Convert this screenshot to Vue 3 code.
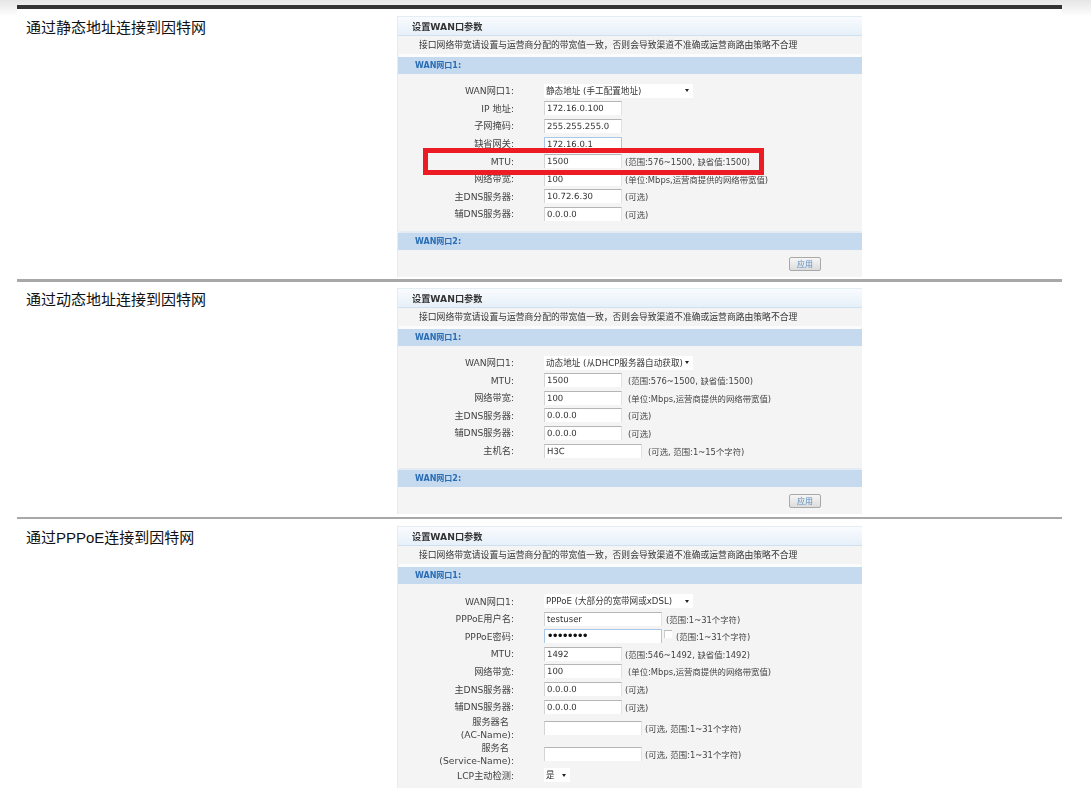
<script setup>
const notice = '接口网络带宽请设置与运营商分配的带宽值一致，否则会导致渠道不准确或运营商路由策略不合理'
const mtuHint = (a, b, c) => `(范围:${a}~${b}, 缺省值:${c})`
const bandHint = '(单位:Mbps,运营商提供的网络带宽值)'

const sections = [
  {
    id: 'static',
    title: '通过静态地址连接到因特网',
    footer: true,
    highlight: true,
    rows: [
      { label: 'WAN网口1:', select: '静态地址 (手工配置地址)', width: 149 },
      { label: 'IP 地址:', value: '172.16.0.100', width: 78 },
      { label: '子网掩码:', value: '255.255.255.0', width: 78 },
      { label: '缺省网关:', value: '172.16.0.1', width: 78, focus: true },
      { label: 'MTU:', value: '1500', width: 78, hint: mtuHint(576, 1500, 1500), gap: 3 },
      { label: '网络带宽:', value: '100', width: 78, hint: bandHint, gap: 3 },
      { label: '主DNS服务器:', value: '10.72.6.30', width: 78, hint: '(可选)', gap: 3 },
      { label: '辅DNS服务器:', value: '0.0.0.0', width: 78, hint: '(可选)', gap: 3 }
    ]
  },
  {
    id: 'dynamic',
    title: '通过动态地址连接到因特网',
    footer: true,
    rows: [
      { label: 'WAN网口1:', select: '动态地址 (从DHCP服务器自动获取)', width: 149 },
      { label: 'MTU:', value: '1500', width: 78, hint: mtuHint(576, 1500, 1500), gap: 6 },
      { label: '网络带宽:', value: '100', width: 78, hint: bandHint, gap: 6 },
      { label: '主DNS服务器:', value: '0.0.0.0', width: 78, hint: '(可选)', gap: 6 },
      { label: '辅DNS服务器:', value: '0.0.0.0', width: 78, hint: '(可选)', gap: 6 },
      { label: '主机名:', value: 'H3C', width: 98, hint: '(可选, 范围:1~15个字符)', gap: 6 }
    ]
  },
  {
    id: 'pppoe',
    title: '通过PPPoE连接到因特网',
    rows: [
      { label: 'WAN网口1:', select: 'PPPoE (大部分的宽带网或xDSL)', width: 149 },
      { label: 'PPPoE用户名:', value: 'testuser', width: 118, hint: '(范围:1~31个字符)', gap: 4 },
      { label: 'PPPoE密码:', value: '••••••••', width: 118, focus: true, secret: true, check: true, hint: '(范围:1~31个字符)', gap: 4 },
      { label: 'MTU:', value: '1492', width: 78, hint: mtuHint(546, 1492, 1492), gap: 3 },
      { label: '网络带宽:', value: '100', width: 78, hint: bandHint, gap: 6 },
      { label: '主DNS服务器:', value: '0.0.0.0', width: 78, hint: '(可选)', gap: 3 },
      { label: '辅DNS服务器:', value: '0.0.0.0', width: 78, hint: '(可选)', gap: 3 },
      { label: '服务器名', sub: '(AC-Name):', value: '', width: 98, hint: '(可选, 范围:1~31个字符)', gap: 3 },
      { label: '服务名', sub: '(Service-Name):', value: '', width: 98, hint: '(可选, 范围:1~31个字符)', gap: 3 },
      { label: 'LCP主动检测:', select: '是', width: 26 }
    ]
  }
]
</script>

<template>
  <div class="page">
    <div class="content">
      <section v-for="s in sections" :key="s.id" class="section" :class="s.id">
        <h3 class="section-title">{{ s.title }}</h3>
        <div class="shot">
          <div class="panel">
            <div class="panel-head">设置WAN口参数</div>
            <div class="panel-note">{{ notice }}</div>
            <div class="bar">WAN网口1:</div>
            <div class="form">
              <div v-for="r in s.rows" :key="r.label" class="row" :class="{ tall: r.sub }">
                <div class="label">
                  <template v-if="r.sub">
                    <span class="label-top">{{ r.label }}</span>
                    <span>{{ r.sub }}</span>
                  </template>
                  <template v-else>{{ r.label }}</template>
                </div>
                <div v-if="r.select" class="select" :style="{ width: r.width + 'px' }">
                  <span>{{ r.select }}</span>
                  <i class="caret"></i>
                </div>
                <div v-else class="input" :class="{ focus: r.focus, secret: r.secret }" :style="{ width: r.width + 'px' }">{{ r.value }}</div>
                <i v-if="r.check" class="check"></i>
                <div v-if="r.hint" class="hint" :style="{ marginLeft: r.gap + 'px' }">{{ r.hint }}</div>
              </div>
            </div>
            <template v-if="s.footer">
              <div class="bar second">WAN网口2:</div>
              <div class="panel-foot">
                <button class="apply" type="button">应用</button>
              </div>
            </template>
          </div>
          <div v-if="s.highlight" class="mark"></div>
        </div>
      </section>
    </div>
  </div>
</template>

<style>
html,
body {
  margin: 0;
  background: #fff;
}
</style>

<style scoped>
.page {
  height: 788px;
  overflow: hidden;
  box-sizing: border-box;
  padding-top: 5px;
  background: linear-gradient(#e6e6e6, #fff 17px);
  font-family: "DejaVu Sans", "Noto Sans CJK SC", sans-serif;
}
.content {
  width: 1045px;
  margin-left: 17px;
  border-top: 4px solid #333;
  background: #fff;
}
.section {
  display: flex;
  align-items: flex-start;
}
.static {
  padding: 7px 0 2px;
}
.dynamic {
  padding: 6px 0 3px;
  border-top: 3px solid #a8a8a8;
}
.pppoe {
  padding-top: 7px;
  border-top: 2px solid #a8a8a8;
}
.section-title {
  width: 380px;
  margin: 0;
  padding: 1px 0 0 9px;
  box-sizing: border-box;
  flex-shrink: 0;
  font-family: "Liberation Sans", "Noto Sans CJK SC", sans-serif;
  font-size: 15px;
  font-weight: 400;
  line-height: 22px;
  color: #111;
}
.shot {
  position: relative;
  width: 465px;
}
.panel {
  background: #f4f4f4;
  border-left: 1px solid #e3ebf3;
  box-sizing: border-box;
  font-size: 9.2px;
  color: #444;
  filter: blur(0.5px);
}
.panel-head {
  height: 20px;
  padding-left: 14px;
  line-height: 20px;
  font-weight: 700;
  font-size: 9.2px;
  color: #333;
  background: linear-gradient(#f9fbfe, #e6f0f9);
  border-top: 1px solid #e3edf6;
  box-sizing: border-box;
  border-bottom: 1px solid #cfe0f1;
}
.panel-note {
  height: 16px;
  padding-left: 21px;
  margin-top: 1px;
  line-height: 16px;
  font-size: 8.8px;
  color: #333;
  white-space: nowrap;
}
.bar {
  height: 17px;
  margin-top: 4px;
  padding-left: 17px;
  line-height: 17px;
  font-size: 8px;
  font-weight: 700;
  color: #2a6db5;
  background: #c5daef;
  box-shadow: 0 -4px 0 -1px #fbfcfe;
}
.bar.second {
  margin-top: 3px;
  box-shadow: 0 -3px 0 -1px #e4ebf3;
}
.form {
  padding: 8px 0 7px;
}
.dynamic .form {
  padding-bottom: 8px;
}
.row {
  display: flex;
  align-items: center;
  height: 17.6px;
  white-space: nowrap;
}
.row.tall {
  height: 25.6px;
}
.label {
  width: 116px;
  flex-shrink: 0;
  margin-right: 30px;
  text-align: right;
  line-height: 13px;
}
.label span {
  display: block;
}
.label-top {
  padding-right: 5px;
}
.input,
.select {
  height: 14px;
  line-height: 14px;
  padding-left: 2px;
  box-sizing: border-box;
  background: #fff;
  color: #333;
  flex-shrink: 0;
}
.input {
  font-size: 8.5px;
  text-rendering: geometricPrecision;
  border-top: 1px solid #b5b5b5;
  border-left: 1px solid #d4d4d4;
  border-right: 1px solid #e2e2e2;
}
.input.focus {
  border-color: #a9c8e8;
}
.input.secret {
  font-size: 10px;
  color: #111;
  font-weight: 700;
  letter-spacing: -1.4px;
}
.select {
  display: flex;
  align-items: center;
  justify-content: space-between;
  padding-right: 4px;
  font-size: 8.6px;
}
.caret {
  width: 0;
  height: 0;
  flex-shrink: 0;
  border-left: 2.5px solid transparent;
  border-right: 2.5px solid transparent;
  border-top: 3px solid #222;
}
.check {
  width: 8px;
  height: 8px;
  margin-left: 2px;
  margin-top: -4px;
  border-top: 1px solid #bbb;
  border-left: 1px solid #ccc;
  box-sizing: border-box;
  background: #fff;
}
.hint {
  font-size: 8.4px;
  color: #444;
}
.panel-foot {
  height: 27px;
  display: flex;
  justify-content: flex-end;
  align-items: flex-start;
  padding: 7px 41px 0 0;
  box-sizing: border-box;
}
.apply {
  width: 32px;
  height: 14px;
  padding: 0;
  font-family: "Noto Sans CJK SC", sans-serif;
  font-size: 8px;
  line-height: 12px;
  color: #5b8fc4;
  background: linear-gradient(#f6f6f6, #dcdcdc);
  border: 1px solid #a9a9a9;
  border-radius: 2px;
}
.mark {
  position: absolute;
  left: 26px;
  top: 132px;
  width: 341px;
  height: 27px;
  box-sizing: border-box;
  border: 5px solid #ed1c24;
}
</style>
